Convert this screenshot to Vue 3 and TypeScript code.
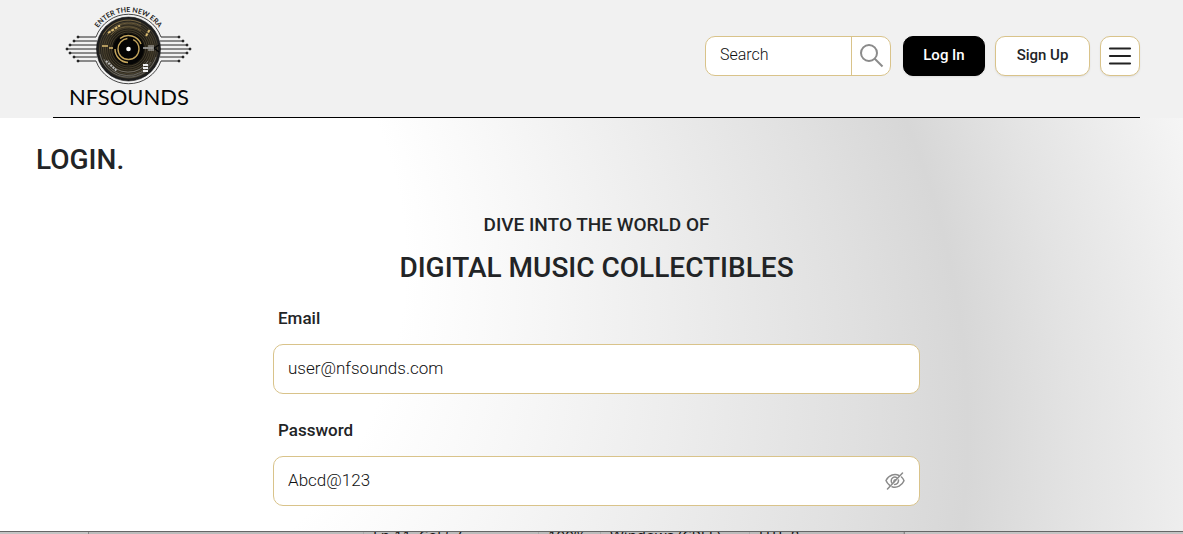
<script setup lang="ts">
import { ref } from 'vue'

const search = ref('')
const email = ref('user@nfsounds.com')
const password = ref('Abcd@123')
const showPassword = ref(true)

const grooves = [12, 15, 17, 19, 21, 23, 25, 27, 29]
const traces = [
  { y: 37, left: 28, right: 129, edge: 46 },
  { y: 41, left: 24, right: 133, edge: 47 },
  { y: 45, left: 20, right: 137, edge: 47 },
  { y: 49, left: 17, right: 140, edge: 47 },
  { y: 53, left: 20, right: 137, edge: 47 },
  { y: 57, left: 24, right: 133, edge: 47 },
  { y: 61, left: 28, right: 129, edge: 46 },
]
</script>

<template>
  <div class="page">
    <header class="header">
      <div class="bar">
        <a class="logo" href="#" aria-label="NFSOUNDS home">
          <svg viewBox="15 5 128 104" width="128" height="104">
            <defs>
              <path id="tagline" d="M45 33.4A37 37 0 0 1 112 33.4" />
              <radialGradient id="disc">
                <stop offset="0.3" stop-color="#080705" />
                <stop offset="0.75" stop-color="#2c271c" />
                <stop offset="1" stop-color="#1b1c1e" />
              </radialGradient>
            </defs>
            <g stroke="#222" stroke-width="1" fill="#050505">
              <template v-for="t in traces" :key="t.y">
                <path :d="`M${t.left} ${t.y}H${t.edge}M${157 - t.edge} ${t.y}H${t.right}`" />
                <circle :cx="t.left" :cy="t.y" r="1" />
                <circle :cx="t.right" :cy="t.y" r="1" />
              </template>
            </g>
            <path d="M46 37A34.6 34.6 0 0 1 111 37M46 61A34.6 34.6 0 0 0 111 61" fill="none" stroke="#333" stroke-width="0.9" />
            <circle cx="78.5" cy="49" r="32" fill="url(#disc)" stroke="#111" stroke-width="0.6" />
            <g fill="none" stroke-width="0.5">
              <circle v-for="r in grooves" :key="r" cx="78.5" cy="49" :r="r" stroke="#6a5e42" />
              <path d="M50 54A29 29 0 0 0 106 57M54 59A26 26 0 0 0 101 62M58 60A23 23 0 0 0 98 61" stroke="#a0a0a0" />
              <path d="M53 35A29 29 0 0 1 91 23M57 35A26 26 0 0 1 91 26M61 35A22 22 0 0 1 91 31" stroke="#a88f58" />
            </g>
            <circle cx="78.5" cy="49" r="15.5" fill="#050505" />
            <g fill="none" stroke="#c3a45c">
              <path d="M70 38.5A13.5 13.5 0 0 1 91 44" stroke-width="1.5" />
              <path d="M78 62.5A13.5 13.5 0 0 1 65 49" stroke-width="1.5" />
              <circle cx="78.5" cy="49" r="10.5" stroke-width="1.4" stroke-dasharray="48 6" />
            </g>
            <circle cx="78.5" cy="49" r="2.3" fill="#fff" />
            <g stroke="#dbbc72" stroke-width="2" fill="none">
              <path d="M58 33L70 25.5" stroke-dasharray="3 1" />
              <path d="M96 36L100 29" stroke-dasharray="3 1" />
              <path d="M52 46H58M59 48H63" stroke-width="1.4" />
            </g>
            <g stroke="#bbb" stroke-width="2" fill="none">
              <path d="M56 61L67 71" stroke-dasharray="2 1" />
              <path d="M93 48H104" stroke-width="1.4" />
              <path d="M98 46H104M98 50H104" stroke-width="1" />
              <path d="M104 48L109 45M104 48L109 52" stroke="#050505" stroke-width="1.4" />
              <path d="M93 65H98M93 68H98M93 71H98" stroke="#eee" />
            </g>
            <text class="tagline"><textPath href="#tagline" startOffset="50%" text-anchor="middle">ENTER THE NEW ERA</textPath></text>
            <text class="wordmark" x="79" y="105" text-anchor="middle">NFSOUNDS</text>
          </svg>
        </a>

        <div class="actions">
          <form class="search" role="search" @submit.prevent>
            <input v-model="search" type="text" placeholder="Search" aria-label="Search" />
            <button type="submit" aria-label="Submit search">
              <svg viewBox="0 0 26 26" width="26" height="26" fill="none" stroke="#8b8b8b" stroke-width="2">
                <circle cx="11" cy="10" r="8" />
                <path d="M16.5 15.5L24.5 23.5" />
              </svg>
            </button>
          </form>
          <button class="btn dark" type="button">Log In</button>
          <button class="btn signup" type="button">Sign Up</button>
          <button class="btn menu" type="button" aria-label="Menu">
            <svg viewBox="0 0 24 20" width="24" height="20" stroke="#222" stroke-width="2.2" stroke-linecap="round">
              <path d="M2 2.5H22M2 10H22M2 17.5H22" />
            </svg>
          </button>
        </div>
      </div>
    </header>

    <main class="main">
      <svg class="backdrop" viewBox="0 118 1183 413" preserveAspectRatio="none" aria-hidden="true">
        <defs>
          <radialGradient id="sweep" gradientUnits="userSpaceOnUse" cx="251" cy="546" r="1111" fx="40" fy="264" fr="365">
            <stop offset="0" stop-color="#fff" />
            <stop offset="0.13" stop-color="#f7f7f7" />
            <stop offset="0.28" stop-color="#ededed" />
            <stop offset="0.47" stop-color="#e0e0e0" />
            <stop offset="0.588" stop-color="#d7d7d7" />
            <stop offset="0.7" stop-color="#e3e3e3" />
            <stop offset="1" stop-color="#fff" />
          </radialGradient>
        </defs>
        <rect x="0" y="118" width="1183" height="413" fill="url(#sweep)" />
      </svg>

      <h1>LOGIN.</h1>
      <form class="login" @submit.prevent>
        <p class="lead">DIVE INTO THE WORLD OF</p>
        <h2>DIGITAL MUSIC COLLECTIBLES</h2>
        <label for="email">Email</label>
        <div class="field">
          <input id="email" v-model="email" type="text" autocomplete="off" spellcheck="false" />
        </div>
        <label for="password">Password</label>
        <div class="field">
          <input id="password" v-model="password" :type="showPassword ? 'text' : 'password'" autocomplete="off" spellcheck="false" />
          <button type="button" aria-label="Toggle password visibility" @click="showPassword = !showPassword">
            <svg viewBox="0 0 20 18" width="20" height="18" fill="none" stroke="#8b8b8b" stroke-width="1.5" stroke-linecap="round">
              <path d="M14 3.5C10 1.5 4 2.5 1 8.5C1.8 10.5 3 12 4.5 13.2M7 14.7C12 16.5 17 13.5 19 8.8C18.5 7.2 17.5 5.9 16.5 5" />
              <path d="M12 5.8C9 4 6 6 6.2 9C6.3 10 6.6 10.7 7.2 11.3M9.5 12.4C12 12.6 13.7 10.5 13.5 8M9 9.7C8.8 8.5 9.5 7.7 10.5 7.7" />
              <path d="M17.5 1L2.5 17" />
            </svg>
          </button>
        </div>
      </form>
    </main>

    <footer class="status">
      <div class="panel">
        <span></span>
        <span>Ln 11, Col 57</span>
        <span>100%</span>
        <span>Windows (CRLF)</span>
        <span>UTF-8</span>
      </div>
    </footer>
  </div>
</template>

<style>
body {
  margin: 0;
}
</style>

<style scoped>
* {
  box-sizing: border-box;
}

.page {
  min-height: 100vh;
  display: flex;
  flex-direction: column;
  font-family: Roboto, "Liberation Sans", sans-serif;
  color: #222426;
}

.header {
  background: #f1f1f1;
  padding: 0 43px 0 53px;
}

.bar {
  display: flex;
  justify-content: space-between;
  align-items: flex-start;
  height: 118px;
  border-bottom: 1px solid #000;
}

.logo {
  margin: 5px 0 0 12px;
}

.logo svg {
  display: block;
  overflow: visible;
}

.tagline {
  font: 700 7px Lato, sans-serif;
  fill: #222;
}

.wordmark {
  font: 400 22px Lato, sans-serif;
  fill: #050505;
}

.actions {
  display: flex;
  gap: 10px;
  padding-top: 36px;
}

.search {
  display: flex;
  width: 186px;
  height: 40px;
  margin-right: 2px;
  background: #fff;
  border: 1px solid #d9c38a;
  border-radius: 10px;
  overflow: hidden;
}

input {
  flex: 1;
  min-width: 0;
  border: 0;
  outline: 0;
  background: none;
  padding: 0 14px;
  color: #111;
  font-family: inherit;
  font-weight: 300;
}

.search input {
  font-size: 16px;
  padding-bottom: 4px;
}

input::placeholder {
  color: #111;
  opacity: 1;
}

.search button {
  width: 39px;
  padding: 0;
  display: grid;
  place-items: center;
  background: none;
  border: 0;
  border-left: 1px solid #d9c38a;
}

.btn {
  height: 40px;
  padding: 0 0 3px;
  background: #fff;
  border: 1px solid #d9c38a;
  border-radius: 10px;
  box-shadow: 0 1px 2px rgba(0, 0, 0, 0.08);
  color: #222426;
  font: 500 15px Roboto, "Liberation Sans", sans-serif;
}

.dark {
  width: 82px;
  background: #000;
  border-color: #000;
  color: #fff;
}

.signup {
  width: 95px;
}

.menu {
  width: 40px;
  padding: 0;
  display: grid;
  place-items: center;
}

.main {
  position: relative;
  flex: 1;
  padding: 24px 36px 0;
  background: #fff;
}

.backdrop {
  position: absolute;
  inset: 0;
  width: 100%;
  height: 100%;
}

h1,
.login {
  position: relative;
}

h1,
h2,
.lead {
  margin: 0;
  font-weight: 500;
}

h1,
h2 {
  font-size: 28px;
  line-height: 36px;
}

.login {
  width: 60%;
  max-width: 647px;
  margin: 34px auto 0;
  left: 5px;
}

.lead {
  text-align: center;
  font-size: 19px;
  line-height: 26px;
}

h2 {
  margin-top: 12px;
  text-align: center;
}

label {
  display: block;
  width: fit-content;
  padding-left: 5px;
  font-size: 17px;
  font-weight: 500;
  line-height: 24px;
}

h2 + label {
  margin-top: 20px;
}

.field {
  display: flex;
  height: 50px;
  margin: 14px 0 24px;
  background: #fff;
  border: 1px solid #d9c38a;
  border-radius: 10px;
}

.field input {
  font-size: 17px;
  padding-bottom: 2px;
}

.field button {
  width: 48px;
  padding: 0;
  display: grid;
  place-items: center;
  background: none;
  border: 0;
}

.status {
  height: 3px;
  overflow: hidden;
  background: #c4c4c4;
  border-top: 1px solid #666;
}

.panel {
  display: grid;
  grid-template-columns: 275px 175px 62px 149px 1fr;
  width: 817px;
  margin-left: 88px;
  background: #bcbcbc;
  border-left: 1px solid #888;
  border-right: 1px solid #888;
  color: #111;
  font: 15px/7px "Open Sans", sans-serif;
}

.panel span {
  height: 12px;
  padding-left: 9px;
  border-right: 1px solid #aaa;
  white-space: nowrap;
}
</style>
